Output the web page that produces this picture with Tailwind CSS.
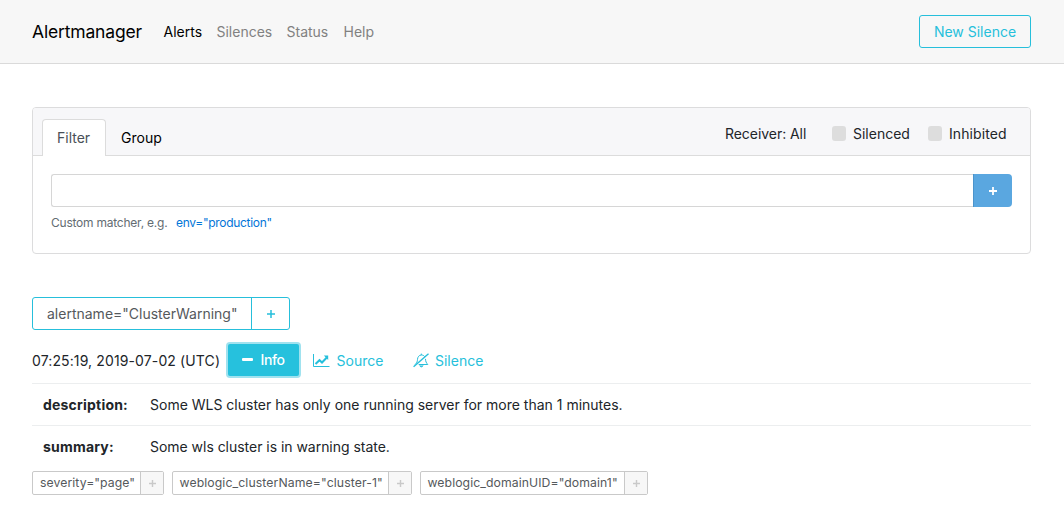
<!DOCTYPE html>
<html lang="en">
<head>
<meta charset="utf-8">
<title>Alertmanager</title>
<script src="https://cdn.jsdelivr.net/npm/@tailwindcss/browser@4"></script>
</head>
<body class="bg-white font-['Inter',sans-serif] text-[14px] leading-[21px] text-[#212529] whitespace-nowrap overflow-hidden">
<header class="h-16 bg-[#f7f7f7] border-b border-[#dadada] pl-8 pr-[33px] flex items-center justify-between">
  <nav class="flex items-center text-[#818181]">
    <a class="w-[131.5px] text-[17.5px] tracking-[-0.17px] text-black">Alertmanager</a>
    <a class="w-[53px] text-black">Alerts</a>
    <a class="w-[70px]">Silences</a>
    <a class="w-[57px]">Status</a>
    <a>Help</a>
  </nav>
  <button class="w-28 h-[33px] border border-[#26bfdb] rounded-[3px] text-[#26bfdb]">New Silence</button>
</header>
<main class="pl-8 pr-[33px] pt-[43px]">
  <section class="h-[147px] border border-[#dcdcdd] rounded-[4px]">
    <div class="h-12 bg-[#f7f7f9] border-b border-[#dcdcdc] rounded-t-[3px] flex justify-between pl-[9px] pr-[23px]">
      <div class="flex pt-[11px]">
        <div class="w-16 h-[37px] bg-white border border-b-0 border-[#dcdcdc] rounded-t-[4px] pl-3.5 pt-[7px] text-[#495057]">Filter</div>
        <div class="pl-[15px] pt-[8px] text-black">Group</div>
      </div>
      <div class="flex pt-[15px]">
        <span class="w-[107px] tracking-[-0.05px]">Receiver: All</span>
        <span class="w-3.5 h-[15px] mt-[3px] rounded-[3px] bg-[#ddd]"></span>
        <span class="w-[75px] ml-[7px]">Silenced</span>
        <span class="w-3.5 h-[15px] mt-[3px] rounded-[3px] bg-[#ddd]"></span>
        <span class="ml-[7px] w-[58px] tracking-[0.08px]">Inhibited</span>
      </div>
    </div>
    <div class="px-[18px] pt-[18px]">
      <div class="flex h-[33px]">
        <div class="flex-1 border border-r-0 border-[#d6d6d6] rounded-l-[3px]"></div>
        <button class="w-[39px] bg-[#5aa7e0] border-l border-[#4b94cc] rounded-r-[4px] flex items-center justify-center">
          <svg width="8" height="8" viewBox="0 0 8 8" stroke="#fff" stroke-width="1.8"><path d="M0 4h8M4 0v8"/></svg>
        </button>
      </div>
      <div class="flex text-[12px] leading-[18px] pt-[7px] text-[#636c72]"><span class="w-[125px] tracking-[-0.23px]">Custom matcher, e.g.</span><a class="text-[#0275d8] tracking-[-0.3px]">env="production"</a></div>
    </div>
  </section>
  <div class="mt-[43px] w-[258px] h-[33px] border border-[#26bfdb] rounded-[3px] flex text-[#55595c]">
    <span class="w-[219px] border-r border-[#26bfdb] pl-3.5 pt-[5px]">alertname="ClusterWarning"</span>
    <span class="flex-1 flex items-center justify-center"><svg width="8" height="8" viewBox="0 0 8 8" stroke="#26bfdb" stroke-width="1.5"><path d="M0 4h8M4 0v8"/></svg></span>
  </div>
  <div class="h-[53px] pt-[14px] flex items-start text-[#26bfdb]">
    <span class="w-[195.5px] pt-[6px] tracking-[0.12px] text-[#212529]">07:25:19, 2019-07-02 (UTC)</span>
    <button class="w-[71px] h-[31.5px] bg-[#26c1dd] rounded-[2px] ring-2 ring-[#a0e2ef] flex text-white pl-[14px] pt-[5px] font-medium">
      <span class="w-[11px] h-[3px] mt-[9px] mr-2 bg-white rounded-[1px]"></span><span class="tracking-[-0.4px]">Info</span>
    </button>
    <svg class="ml-[14.5px] mt-[9px]" width="17" height="15" viewBox="0 0 17 15" fill="none" stroke="#26bfdb"><path d="M.5 1v12.500H16.500"/><path d="M2.500 11 6.500 7.200l2.500 2.300 4.600-4.700" stroke-width="2"/><path d="M10.800 2.500h4.400v4.400z" fill="#26bfdb" stroke="none"/></svg>
    <span class="ml-[6.5px] w-[76px] pt-[6px]">Source</span>
    <svg class="mt-[9px]" width="17" height="15" viewBox="0 0 17 15" fill="none" stroke="#26bfdb"><path d="M.6 13.800 15.500.7" stroke-width="1.400"/><path d="M2 11.500c2-1.700 2.400-3 2.500-5.200C4.700 3.900 6 2.200 8.300 2c1.600 0 2.700.6 3.400 1.600M8.300 2V.6M12.500 5.900c0 2.500.8 4 2.300 5.600H5.700"/><path d="M6.800 12.500c.2 1.800 2.900 1.800 3.200 0" fill="#26bfdb"/></svg>
    <span class="ml-[5.5px] pt-[6px]">Silence</span>
  </div>
  <dl>
    <div class="h-[42px] border-t border-[#eceeef] flex items-center pl-[11px]"><dt class="w-[107px] font-bold tracking-[0.2px]">description:</dt><dd>Some WLS cluster has only one running server for more than 1 minutes.</dd></div>
    <div class="h-[46px] border-t border-[#eceeef] flex pt-[10px] pl-[11px]"><dt class="w-[107px] font-bold tracking-[0.2px]">summary:</dt><dd class="tracking-[-0.03px]">Some wls cluster is in warning state.</dd></div>
  </dl>
  <div class="flex gap-2 text-[12.25px] leading-[22px] tracking-[0.07px] text-[#55595c]">
    <div class="w-[132px] h-6 border border-[#c9c9c9] rounded-[2px] flex"><span class="flex-1 pl-[7px]">severity="page"</span><span class="w-[23px] bg-[#f7f7f7] border-l border-[#c9c9c9] flex items-center justify-center"><svg width="7" height="7" viewBox="0 0 7 7" stroke="#c9c9c9" stroke-width="1.400"><path d="M0 3.500h7M3.500 0v7"/></svg></span></div>
    <div class="w-[240px] h-6 border border-[#c9c9c9] rounded-[2px] flex"><span class="flex-1 pl-[6.5px] tracking-[0.1px]">weblogic_clusterName="cluster-1"</span><span class="w-[23px] bg-[#f7f7f7] border-l border-[#c9c9c9] flex items-center justify-center"><svg width="7" height="7" viewBox="0 0 7 7" stroke="#c9c9c9" stroke-width="1.400"><path d="M0 3.500h7M3.500 0v7"/></svg></span></div>
    <div class="w-[228px] h-6 border border-[#c9c9c9] rounded-[2px] flex"><span class="flex-1 pl-[6.5px]">weblogic_domainUID="domain1"</span><span class="w-[23px] bg-[#f7f7f7] border-l border-[#c9c9c9] flex items-center justify-center"><svg width="7" height="7" viewBox="0 0 7 7" stroke="#c9c9c9" stroke-width="1.400"><path d="M0 3.500h7M3.500 0v7"/></svg></span></div>
  </div>
</main>
</body>
</html>
